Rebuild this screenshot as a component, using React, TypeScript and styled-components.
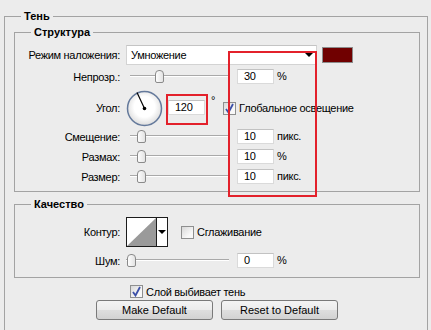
import React from "react";
import styled, { createGlobalStyle } from "styled-components";

const GlobalStyle = createGlobalStyle`
  html, body {
    margin: 0;
    padding: 0;
    background: #ececec;
  }
  body {
    font-family: "Liberation Sans", Arial, sans-serif;
    font-size: 11px;
    letter-spacing: -0.3px;
    color: #000;
  }
`;

const Page = styled.div`
  position: relative;
  width: 431px;
  height: 330px;
  overflow: hidden;
  padding-top: 10px;
  box-sizing: border-box;
`;

const Group = styled.fieldset<{ $pad: string; $mt?: number }>`
  margin: ${(p) => p.$mt || 0}px 0 0 0;
  padding: ${(p) => p.$pad};
  border: 1px solid #a3a3a3;
  min-width: 0;
`;

const Outer = styled(Group)`
  margin: 0 3px 0 4px;
  height: 400px;
`;

const Legend = styled.legend<{ $ml: number }>`
  font-weight: bold;
  line-height: 13px;
  padding: 0 3px;
  margin-left: ${(p) => p.$ml}px;
  letter-spacing: 0;
`;

const Row = styled.div<{ $h: number; $mt: number }>`
  display: flex;
  align-items: center;
  height: ${(p) => p.$h}px;
  margin-top: ${(p) => p.$mt}px;
`;

const Label = styled.span`
  flex-shrink: 0;
  width: 105px;
  margin-right: 6px;
  text-align: right;
  white-space: nowrap;
`;

const Select = styled.div`
  display: flex;
  align-items: center;
  justify-content: space-between;
  box-sizing: border-box;
  width: 191px;
  height: 20px;
  padding: 0 3px 0 4px;
  background: #fff;
  border: 1px solid #d3d3d3;
  border-top-color: #c4c4c4;
`;

const Arrow = styled.span`
  width: 0;
  height: 0;
  border-left: 4px solid transparent;
  border-right: 4px solid transparent;
  border-top: 4px solid #000;
`;

const Swatch = styled.div`
  box-sizing: border-box;
  width: 31px;
  height: 16px;
  margin-left: 5px;
  background: #700000;
  border: 1px solid #8c8c8c;
`;

const Slider = styled.div<{ $start: number }>`
  display: flex;
  align-items: center;
  box-sizing: border-box;
  width: ${(p) => 103 - p.$start}px;
  height: 15px;
  margin-left: ${(p) => p.$start}px;
  margin-right: 8px;
  background: linear-gradient(
    to bottom,
    transparent 6px,
    #a9a9a9 6px,
    #a9a9a9 7px,
    #ffffff 7px,
    #ffffff 8px,
    transparent 8px
  );
`;

const Thumb = styled.div<{ $at: number }>`
  box-sizing: border-box;
  width: 9px;
  height: 13px;
  margin-left: ${(p) => p.$at}px;
  border: 1px solid #8a8a8a;
  border-radius: 4px 4px 2px 2px;
  background: linear-gradient(to right, #fdfdfd, #e3e3e3);
`;

const NumBox = styled.div<{ $mt?: number }>`
  box-sizing: border-box;
  flex-shrink: 0;
  width: 37px;
  height: 15px;
  margin-top: ${(p) => p.$mt || 0}px;
  padding-left: 6px;
  line-height: 13px;
  background: #fff;
  border: 1px solid #dadada;
  border-top-color: #c2c2c2;
`;

const Unit = styled.span<{ $ml?: number; $top?: boolean }>`
  margin-left: ${(p) => (p.$ml === undefined ? 3 : p.$ml)}px;
  align-self: ${(p) => (p.$top ? "flex-start" : "auto")};
  margin-top: ${(p) => (p.$top ? 4 : 0)}px;
  margin-bottom: 2px;
  white-space: nowrap;
`;

const Box = styled.span<{ $ml: number }>`
  display: inline-flex;
  align-items: center;
  justify-content: center;
  box-sizing: border-box;
  flex-shrink: 0;
  width: 13px;
  height: 13px;
  margin-left: ${(p) => p.$ml}px;
  margin-right: 3px;
  border: 1px solid #8e8f8f;
  background: linear-gradient(135deg, #d8d8d8, #f8f8f8 70%);
`;

const Picker = styled.div`
  display: flex;
  box-sizing: border-box;
  width: 42px;
  height: 30px;
  margin-right: 13px;
  border: 1px solid #1c1c1c;
  background: #fff;
`;

const PickerArrow = styled.div`
  display: flex;
  align-items: center;
  justify-content: center;
  flex: 1;
  border-left: 1px solid #1c1c1c;
`;

const CheckLine = styled.div`
  display: flex;
  align-items: center;
  height: 13px;
  margin: 7px 0 0 116px;
`;

const Buttons = styled.div`
  display: flex;
  gap: 8px;
  margin: 2px 0 0 82px;
`;

const Button = styled.button`
  box-sizing: border-box;
  width: 117px;
  height: 20px;
  padding: 0;
  font-family: inherit;
  font-size: 11px;
  color: #000;
  border: 1px solid #7a7a7a;
  border-radius: 3px;
  background: linear-gradient(
    to bottom,
    #f4f4f4 0%,
    #ececec 48%,
    #dedede 52%,
    #d2d2d2 100%
  );
`;

const Mark = styled.div<{ $x: number; $y: number; $w: number; $h: number }>`
  position: absolute;
  left: ${(p) => p.$x}px;
  top: ${(p) => p.$y}px;
  width: ${(p) => p.$w}px;
  height: ${(p) => p.$h}px;
  box-sizing: border-box;
  border: 2px solid #e3212b;
  pointer-events: none;
`;

const Check: React.FC<{ ml: number; on?: boolean }> = ({ ml, on }) => (
  <Box $ml={ml}>
    {on && (
      <svg width="11" height="11" viewBox="0 0 11 11">
        <path d="M2 6 L4.5 9.5 L9 1" fill="none" stroke="#3c50a8" strokeWidth="1.8" />
      </svg>
    )}
  </Box>
);

const Dial = () => (
  <svg width="37" height="37" viewBox="0 0 37 37" style={{ flexShrink: 0 }}>
    <defs>
      <radialGradient id="dialFill" cx="50%" cy="45%" r="55%">
        <stop offset="55%" stopColor="#ffffff" />
        <stop offset="100%" stopColor="#dcdcdc" />
      </radialGradient>
    </defs>
    <circle cx="18.5" cy="18.5" r="17" fill="url(#dialFill)" stroke="#64799b" strokeWidth="1.5" />
    <line x1="18.5" y1="18.5" x2="11" y2="2.5" stroke="#000" strokeWidth="1.2" />
    <circle cx="18.5" cy="18.5" r="1.8" fill="#000" />
  </svg>
);

const SliderRow: React.FC<{
  label: string;
  mt: number;
  thumb: number;
  value: string;
  unit: string;
  start?: number;
}> = ({ label, mt, thumb, value, unit, start = 4 }) => (
  <Row $h={15} $mt={mt}>
    <Label>{label}</Label>
    <Slider $start={start}>
      <Thumb $at={thumb} />
    </Slider>
    <NumBox>{value}</NumBox>
    <Unit>{unit}</Unit>
  </Row>
);

export default function App() {
  return (
    <Page>
      <GlobalStyle />
      <Outer $pad="3px 7px 0 9px">
        <Legend $ml={7}>Тень</Legend>
        <Group $pad="6px 0 7px 0">
          <Legend $ml={16}>Структура</Legend>
          <Row $h={20} $mt={0}>
            <Label>Режим наложения:</Label>
            <Select>
              <span>Умножение</span>
              <Arrow />
            </Select>
            <Swatch />
          </Row>
          <SliderRow label="Непрозр.:" mt={4} thumb={25} value="30" unit="%" />
          <Row $h={36} $mt={6}>
            <Label>Угол:</Label>
            <Dial />
            <NumBox $mt={-2} style={{ marginLeft: 5 }}>
              120
            </NumBox>
            <Unit $ml={6} $top>
              °
            </Unit>
            <Check ml={8} on />
            <span>Глобальное освещение</span>
          </Row>
          <SliderRow label="Смещение:" mt={3} thumb={7} value="10" unit="пикс." />
          <SliderRow label="Размах:" mt={5} thumb={7} value="10" unit="%" />
          <SliderRow label="Размер:" mt={5} thumb={7} value="10" unit="пикс." />
        </Group>
        <Group $pad="6px 0 9px 0" $mt={6}>
          <Legend $ml={16}>Качество</Legend>
          <Row $h={30} $mt={0}>
            <Label>Контур:</Label>
            <Picker>
              <svg width="29" height="28" viewBox="0 0 29 28">
                <polygon points="0,28 29,0 29,28" fill="#9a9a9a" />
              </svg>
              <PickerArrow>
                <Arrow />
              </PickerArrow>
            </Picker>
            <Check ml={0} />
            <span>Сглаживание</span>
          </Row>
          <SliderRow label="Шум:" mt={6} thumb={1} value="0" unit="%" start={0} />
        </Group>
        <CheckLine>
          <Check ml={0} on />
          <span>Слой выбивает тень</span>
        </CheckLine>
        <Buttons>
          <Button>Make Default</Button>
          <Button>Reset to Default</Button>
        </Buttons>
      </Outer>
      <Mark $x={228} $y={51} $w={89} $h={146} />
      <Mark $x={166} $y={94} $w={42} $h={31} />
    </Page>
  );
}
